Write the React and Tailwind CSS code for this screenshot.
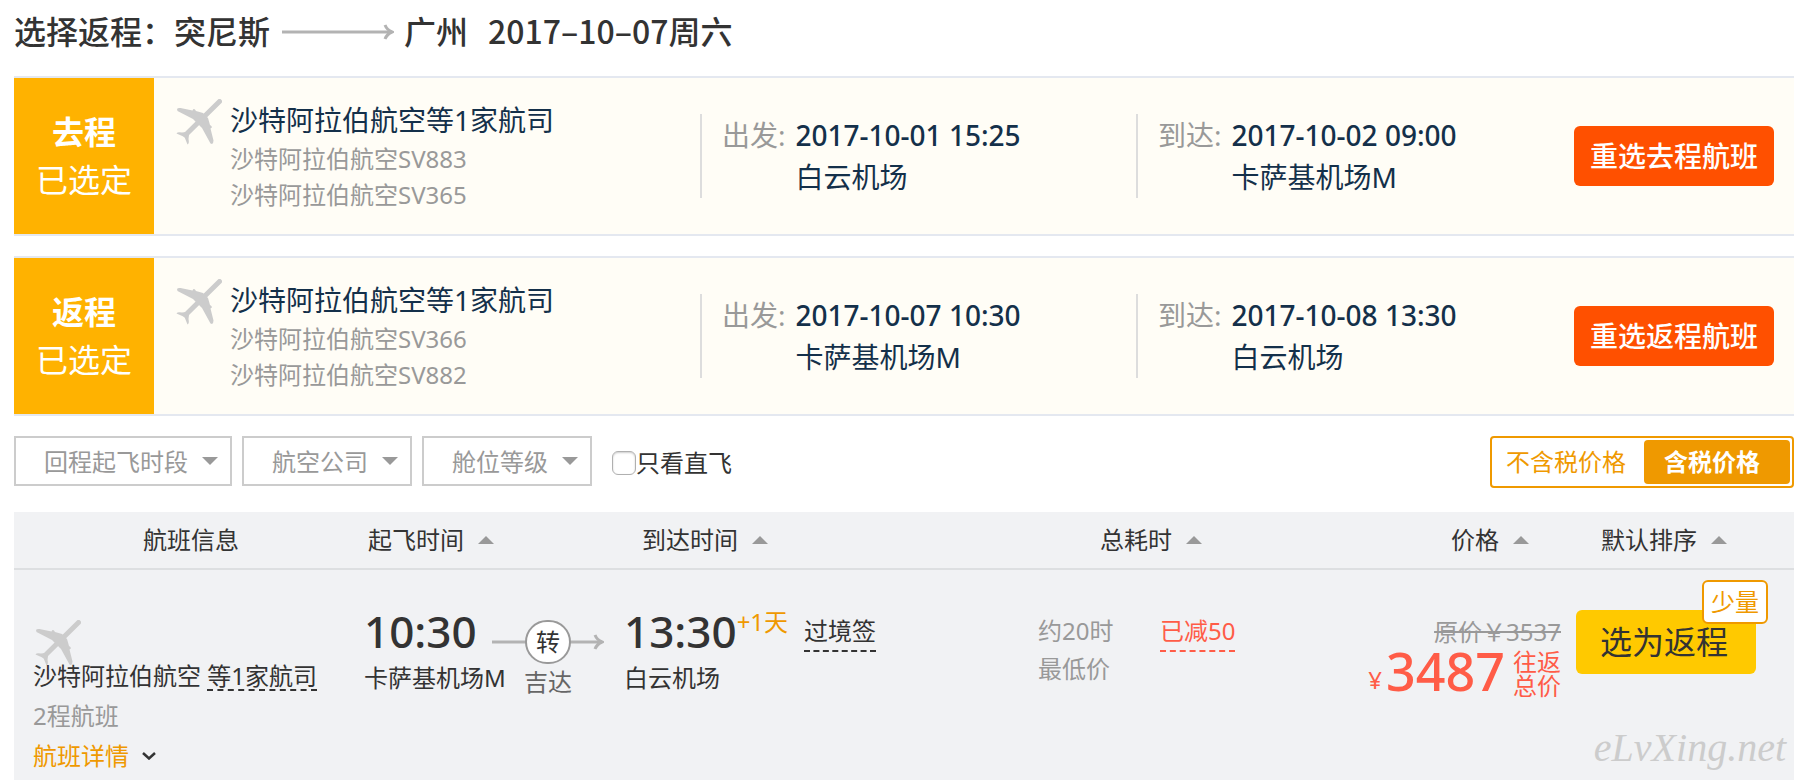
import React from 'react'
import clsx from 'clsx'

const selectedFlights = [
  {
    id: 'outbound',
    direction: '去程',
    airline: '沙特阿拉伯航空等1家航司',
    legs: ['沙特阿拉伯航空SV883', '沙特阿拉伯航空SV365'],
    departTime: '2017-10-01 15:25',
    departAirport: '白云机场',
    arriveTime: '2017-10-02 09:00',
    arriveAirport: '卡萨基机场M',
    action: '重选去程航班',
  },
  {
    id: 'return',
    direction: '返程',
    airline: '沙特阿拉伯航空等1家航司',
    legs: ['沙特阿拉伯航空SV366', '沙特阿拉伯航空SV882'],
    departTime: '2017-10-07 10:30',
    departAirport: '卡萨基机场M',
    arriveTime: '2017-10-08 13:30',
    arriveAirport: '白云机场',
    action: '重选返程航班',
  },
]

const PlaneIcon = ({ className }) => (
  <svg viewBox="0 0 46 46" className={clsx('size-[46px] shrink-0', className)} fill="#cccccc" aria-hidden="true">
    <path d="M43.5 2.5 L9.5 36" stroke="#cccccc" strokeWidth="5" strokeLinecap="round" />
    <path d="M1 10 Q2 8.5 4.5 9 L16.5 11.5 Q18 8.5 20 12 L27 14 L32 19 L34 26 Q37.5 28 34.5 29.5 L37.5 41.5 Q37.5 44 36 45 L34.5 44.5 L26 29 L23 26 L20 23 L17 20 L1.5 12 Z" />
    <path d="M0.5 34.5 Q1.5 32.5 6 33.5 L10 33 L13 36 L12.5 40 Q13.5 44.5 11.5 45.5 L8.5 38 Z" />
  </svg>
)

const Caret = ({ up = false, className }) => (
  <svg viewBox="0 0 16 8" className={clsx('h-2 w-4', className)} fill="#999999" aria-hidden="true">
    <path d={up ? 'M0 8 L8 0 L16 8 Z' : 'M0 0 L8 8 L16 0 Z'} />
  </svg>
)

const LongArrow = ({ className }) => (
  <svg viewBox="0 0 112 16" className={className} fill="none" stroke="#b3b3b3" aria-hidden="true">
    <path d="M0 8 H110" strokeWidth="3" />
    <path d="M103 1 Q105 6 110 8 Q105 10 103 15" strokeWidth="3" />
  </svg>
)

const FlightPoint = ({ label, time, airport, className }) => (
  <div className={clsx('flex h-[84px] gap-[10px] border-l-2 border-[#dddddd] pl-5 text-[28px] leading-[42px] whitespace-nowrap', className)}>
    <span className="text-[#999999]">{label}:</span>
    <div className="text-[#14304a]">
      <div className="font-medium">{time}</div>
      <div>{airport}</div>
    </div>
  </div>
)

const SelectedFlight = ({ flight }) => (
  <section className="flex items-center border-y-2 border-[#e4e8f0] bg-[#fffdf6]">
    <div className="flex h-[156px] w-[140px] shrink-0 flex-col justify-center bg-[#ffb200] text-center text-[32px] leading-[48px] text-white">
      <strong className="font-bold">{flight.direction}</strong>
      <span>已选定</span>
    </div>
    <div className="flex min-w-0 flex-1 items-start gap-2 pl-[22px] whitespace-nowrap">
      <PlaneIcon />
      <div className="text-2xl text-[#999999]">
        <h2 className="text-[28px] leading-[42px] text-[#14304a]">{flight.airline}</h2>
        {flight.legs.map((leg) => (
          <p key={leg} className="leading-9">{leg}</p>
        ))}
      </div>
    </div>
    <FlightPoint label="出发" time={flight.departTime} airport={flight.departAirport} className="w-[436px]" />
    <FlightPoint label="到达" time={flight.arriveTime} airport={flight.arriveAirport} className="w-[438px]" />
    <button type="button" className="mr-5 h-[60px] rounded-md bg-[#ff5000] px-4 text-[28px] font-medium whitespace-nowrap text-white">
      {flight.action}
    </button>
  </section>
)

const FilterSelect = ({ label, className }) => (
  <div className={clsx('relative h-[50px]', className)}>
    <select
      aria-label={label}
      className="h-full w-full appearance-none border-2 border-[#cccccc] bg-white pt-[2px] pl-7 text-2xl text-[#999999]"
    >
      <option>{label}</option>
    </select>
    <Caret className="pointer-events-none absolute top-[21px] right-[14px]" />
  </div>
)

const SortButton = ({ children }) => (
  <button type="button" className="inline-flex items-center gap-[14px] whitespace-nowrap">
    {children}
    <Caret up />
  </button>
)

const App = () => (
  <main className="pr-1 pl-[14px] font-['Noto_Sans','Noto_Sans_CJK_SC',sans-serif] text-[#333333]">
    <h1 className="mb-4 flex h-[60px] items-center font-['Noto_Sans_CJK_SC',sans-serif] text-[32px] font-medium whitespace-nowrap">
      <span>选择返程：突尼斯</span>
      <LongArrow className="mt-1 mr-[10px] ml-3 h-4 w-28" />
      <span>广州</span>
      <span className="ml-5">2017–10–07周六</span>
    </h1>

    <div className="space-y-5">
      {selectedFlights.map((flight) => (
        <SelectedFlight key={flight.id} flight={flight} />
      ))}
    </div>

    <div className="mt-5 mb-6 flex h-[52px] items-start gap-[10px]">
      <FilterSelect label="回程起飞时段" className="w-[218px]" />
      <FilterSelect label="航空公司" className="w-[170px]" />
      <FilterSelect label="舱位等级" className="w-[170px]" />
      <label className="ml-[10px] flex h-[54px] items-center text-2xl">
        <input
          type="checkbox"
          className="size-6 appearance-none rounded-md border border-[#b0b0b0] bg-white shadow-[inset_0_1px_2px_rgba(0,0,0,0.2)]"
        />
        只看直飞
      </label>
      <div className="ml-auto flex h-[52px] rounded border-2 border-[#ef9900] p-[2px] text-2xl whitespace-nowrap">
        <button type="button" aria-pressed="false" className="pr-[18px] pl-3 text-[#ef9900]">不含税价格</button>
        <button type="button" aria-pressed="true" className="rounded bg-[#ef9900] pr-[30px] pl-5 font-bold text-white">含税价格</button>
      </div>
    </div>

    <div className="relative bg-[#f1f2f4]">
      <table className="w-full table-fixed text-left text-2xl whitespace-nowrap">
        <colgroup>
          <col className="w-[350px]" />
          <col className="w-[260px]" />
          <col className="w-[414px]" />
          <col />
          <col className="w-[273px]" />
          <col className="w-[233px]" />
        </colgroup>
        <thead>
          <tr className="h-[57px] border-b-2 border-[#dddfe1]">
            <th className="pl-1 text-center font-normal">航班信息</th>
            <th className="pl-1 font-normal"><SortButton>起飞时间</SortButton></th>
            <th className="pl-[18px] font-normal"><SortButton>到达时间</SortButton></th>
            <th className="pl-[62px] font-normal"><SortButton>总耗时</SortButton></th>
            <th className="pr-8 text-right font-normal"><SortButton>价格</SortButton></th>
            <th className="pl-10 font-normal"><SortButton>默认排序</SortButton></th>
          </tr>
        </thead>
        <tbody>
          <tr className="h-[211px] align-top">
            <td className="pt-[50px] pl-[19px] leading-10">
              <div className="h-9 pl-[2px]">
                <PlaneIcon />
              </div>
              <div className="relative">
                沙特阿拉伯航空{' '}
                <span className="inline-block border-b-2 border-dashed border-[#333333] leading-[26px]">等1家航司</span>
              </div>
              <div className="text-[#999999]">2程航班</div>
              <button type="button" className="flex items-center gap-[13px] text-[#ef9900]">
                航班详情
                <svg viewBox="0 0 14 8" className="h-2 w-[14px]" fill="none" stroke="#333333" strokeWidth="2.5" aria-hidden="true">
                  <path d="M1 1 L7 6.5 L13 1" />
                </svg>
              </button>
            </td>
            <td>
              <div className="flex">
                <div className="w-32 pt-[34px]">
                  <div className="text-[44px] leading-[54px] font-medium">10:30</div>
                  <div className="leading-10">卡萨基机场M</div>
                </div>
                <div className="relative flex w-28 flex-col items-center pt-[50px]">
                  <LongArrow className="absolute top-16 left-0 h-4 w-28" />
                  <div className="relative flex h-11 w-[46px] items-center justify-center rounded-full border-2 border-[#999999] bg-white">转</div>
                  <div className="leading-9 text-[#666666]">吉达</div>
                </div>
              </div>
            </td>
            <td className="pt-[34px]">
              <div className="flex items-start">
                <span className="text-[44px] leading-[54px] font-medium">13:30</span>
                <span className="leading-9 text-[#ef9900]">+1天</span>
                <span className="mt-2 ml-4 border-b-2 border-dashed border-[#333333] leading-[38px]">过境签</span>
              </div>
              <div className="leading-10">白云机场</div>
            </td>
            <td className="pt-[42px]">
              <div className="flex items-start text-[#999999]">
                <div className="w-[122px] leading-[38px]">
                  <div>约20时</div>
                  <div>最低价</div>
                </div>
                <span className="border-b-2 border-dashed border-[#ff5c47] leading-[38px] text-[#ff5c47]">已减50</span>
              </div>
            </td>
            <td className="pt-11 text-right">
              <del className="block leading-9 text-[#999999]">原价￥3537</del>
              <div className="flex items-start justify-end text-[#ff5c47]">
                <span className="mr-1 self-end leading-9">¥</span>
                <strong className="mr-2 text-[52px] leading-[42px] font-medium">3487</strong>
                <span className="leading-6">往返<br />总价</span>
              </div>
            </td>
            <td className="pt-10 pl-[15px]">
              <div className="relative w-[180px]">
                <button type="button" className="h-16 w-full rounded-md bg-[#ffc900] pr-1 text-[32px]">选为返程</button>
                <span className="absolute -top-[30px] -right-3 rounded-md border-2 border-[#ef9900] bg-white px-[7px] leading-10 text-[#ef9900]">少量</span>
              </div>
            </td>
          </tr>
        </tbody>
      </table>
      <span className="absolute right-2 bottom-2 font-['Liberation_Serif',serif] text-[40px] leading-[48px] text-[#cccccc] italic">eLvXing.net</span>
    </div>
  </main>
)

export default App
